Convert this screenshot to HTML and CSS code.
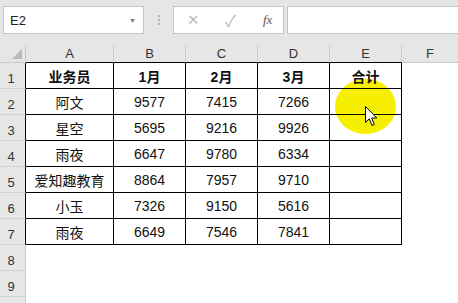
FILE: index.html
```html
<!DOCTYPE html>
<html lang="zh-CN">
<head>
    <meta charset="UTF-8">
    <title>业务员销售表</title>
    <link rel="stylesheet" href="styles.css">
</head>
<body>
    <!-- Name box + formula bar -->
    <div class="toolbar">
        <div class="namebox">
            <span>E2</span>
            <span class="drop">&#9660;</span>
        </div>
        <div class="grip"><i></i><i></i><i></i></div>
        <div class="fbuttons">
            <span class="fbtn">&#10005;</span>
            <span class="fbtn check">&#10003;</span>
            <span class="fbtn fx">fx</span>
        </div>
        <div class="finput"></div>
    </div>

    <!-- Click highlight sits under the grid -->
    <div class="spot"></div>

    <!-- Sheet grid -->
    <div class="sheet">
        <div class="corner"><span class="tri"></span></div>
        <div class="col">A</div>
        <div class="col">B</div>
        <div class="col">C</div>
        <div class="col">D</div>
        <div class="col">E</div>
        <div class="col last">F</div>

        <div class="num">1</div>
        <div class="cell bold">业务员</div>
        <div class="cell bold">1月</div>
        <div class="cell bold">2月</div>
        <div class="cell bold">3月</div>
        <div class="cell bold">合计</div>
        <div class="blank"></div>

        <div class="num">2</div>
        <div class="cell">阿文</div>
        <div class="cell">9577</div>
        <div class="cell">7415</div>
        <div class="cell">7266</div>
        <div class="cell"></div>
        <div class="blank"></div>

        <div class="num">3</div>
        <div class="cell">星空</div>
        <div class="cell">5695</div>
        <div class="cell">9216</div>
        <div class="cell">9926</div>
        <div class="cell"></div>
        <div class="blank"></div>

        <div class="num">4</div>
        <div class="cell">雨夜</div>
        <div class="cell">6647</div>
        <div class="cell">9780</div>
        <div class="cell">6334</div>
        <div class="cell"></div>
        <div class="blank"></div>

        <div class="num">5</div>
        <div class="cell">爱知趣教育</div>
        <div class="cell">8864</div>
        <div class="cell">7957</div>
        <div class="cell">9710</div>
        <div class="cell"></div>
        <div class="blank"></div>

        <div class="num">6</div>
        <div class="cell">小玉</div>
        <div class="cell">7326</div>
        <div class="cell">9150</div>
        <div class="cell">5616</div>
        <div class="cell"></div>
        <div class="blank"></div>

        <div class="num">7</div>
        <div class="cell">雨夜</div>
        <div class="cell">6649</div>
        <div class="cell">7546</div>
        <div class="cell">7841</div>
        <div class="cell"></div>
        <div class="blank"></div>

        <div class="num out">8</div>
        <div class="blank wide"></div>
        <div class="num out">9</div>
        <div class="blank wide"></div>
        <div class="num out"></div>
        <div class="blank wide"></div>
    </div>

    <!-- Mouse pointer -->
    <svg class="pointer" width="13" height="21" viewBox="0 0 13 21">
        <path d="M0.5 0.5 L0.5 16.5 L4.3 12.8 L7 19.5 L9.3 18.5 L6.7 12 L11.8 12 Z" fill="#fff" stroke="#000" stroke-width="1" stroke-linejoin="round"/>
    </svg>
</body>
</html>
```

FILE: styles.css
```css
/* General */
body {
    margin: 0;
    width: 458px;
    height: 303px;
    overflow: hidden;
    background: #fff;
    font-family: 'Liberation Sans', 'Noto Sans CJK SC', sans-serif;
    color: #000;
    position: relative;
}

/* Top bar */
.toolbar {
    display: flex;
    align-items: flex-start;
    height: 45px;
    box-sizing: border-box;
    padding: 6px 0 0 3px;
    background: #e6e6e6;
}

.namebox {
    width: 141px;
    height: 28px;
    box-sizing: border-box;
    background: #fff;
    border: 1px solid #c6c6c6;
    display: flex;
    align-items: center;
    justify-content: space-between;
    padding: 0 7px 0 6px;
    font-size: 13px;
    color: #222;
}

.drop {
    font-size: 7px;
    color: #777;
}

.grip {
    width: 29px;
    height: 28px;
    display: flex;
    flex-direction: column;
    align-items: center;
    justify-content: center;
    gap: 2px;
}

.grip i {
    width: 2px;
    height: 2px;
    background: #b4b4b4;
}

.fbuttons {
    width: 111px;
    height: 28px;
    box-sizing: border-box;
    background: #fff;
    border: 1px solid #c6c6c6;
    display: flex;
    align-items: center;
    padding-left: 13px;
}

.fbtn {
    width: 38px;
    color: #bdbdbd;
    font-size: 15px;
    text-align: left;
}

.fbtn.check {
    font-size: 16px;
}

.fbtn.fx {
    width: auto;
    font-family: 'Liberation Serif', serif;
    font-style: italic;
    font-size: 13px;
    color: #555;
}

.finput {
    flex: 1;
    height: 28px;
    box-sizing: border-box;
    margin-left: 3px;
    background: #fff;
    border: 1px solid #c6c6c6;
    border-right: none;
}

/* Sheet */
.sheet {
    position: relative;
    z-index: 1;
    display: grid;
    grid-template-columns: 26px 88px 72px 72px 72px 72px 1fr;
    grid-template-rows: 18px repeat(10, 26px);
}

.sheet > div {
    box-sizing: border-box;
}

.corner {
    background: #e6e6e6;
    border-right: 1px solid #c8c8c8;
    border-bottom: 1px solid #c8c8c8;
    position: relative;
}

.tri {
    position: absolute;
    right: 3px;
    bottom: 3px;
    width: 0;
    height: 0;
    border-left: 10px solid transparent;
    border-bottom: 10px solid #b9b9b9;
}

.col {
    background: #e6e6e6;
    border-right: 1px solid #cdcdcd;
    border-bottom: 1px solid #000;
    font-size: 13px;
    color: #333;
    display: flex;
    align-items: center;
    justify-content: center;
}

.col.last {
    border-bottom-color: #c8c8c8;
    border-right: none;
}

.num {
    background: #e6e6e6;
    border-right: 1px solid #000;
    border-bottom: 1px solid #d2d2d2;
    font-size: 13px;
    color: #333;
    display: flex;
    align-items: flex-end;
    justify-content: center;
    padding: 0 3px 3px 0;
    line-height: 1;
}

.num.out {
    border-right-color: #c8c8c8;
}

.cell {
    border-right: 1px solid #000;
    border-bottom: 1px solid #000;
    font-size: 14px;
    display: flex;
    align-items: center;
    justify-content: center;
    color: #111;
}

.bold {
    font-weight: bold;
}

.blank.wide {
    grid-column: span 6;
}

/* Highlight overlay */
.spot {
    position: absolute;
    z-index: 0;
    left: 335px;
    top: 79px;
    width: 61px;
    height: 55px;
    border-radius: 50%;
    background: #f6ef00;
    filter: blur(0.6px);
}

.pointer {
    position: absolute;
    z-index: 2;
    left: 365px;
    top: 106px;
}
```
